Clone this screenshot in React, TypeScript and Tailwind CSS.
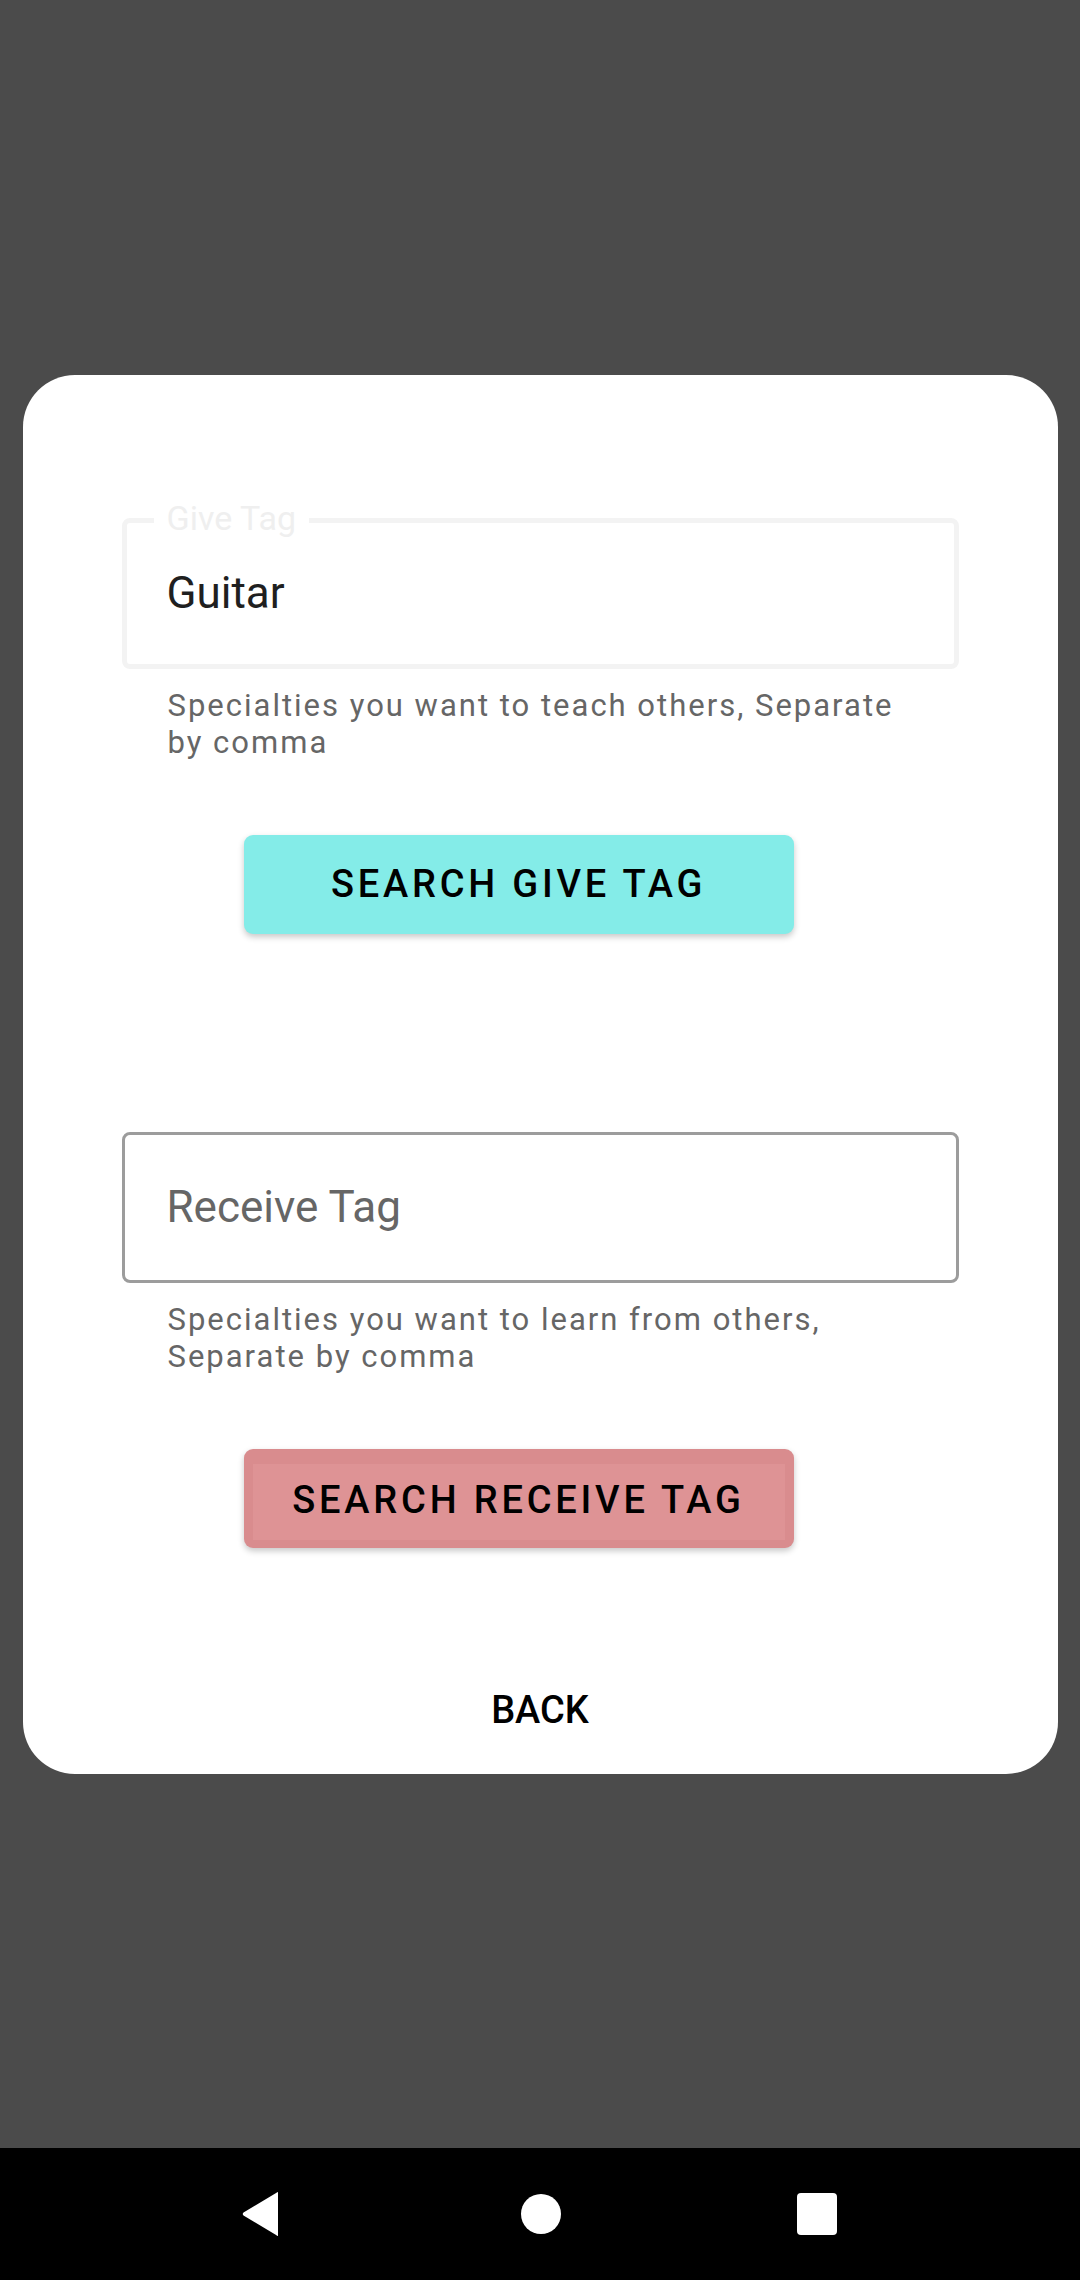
import { useState } from "react";

function TagField({
  label,
  value,
  placeholder,
  helper,
}: {
  label?: string;
  value?: string;
  placeholder?: string;
  helper: string;
}) {
  const filled = Boolean(value);

  return (
    <div className="mx-[99px]">
      <div
        className={
          filled
            ? "relative flex h-[151px] items-center rounded-[8px] border-[5px] border-[#f3f3f3] pl-[40px]"
            : "relative flex h-[151px] items-center rounded-[8px] border-[3px] border-[#9c9c9c] pl-[42px]"
        }
      >
        {filled && label ? (
          <span className="absolute left-[27px] top-[-25px] bg-white px-[13px] text-[34px] leading-[40px] text-[#efefef]">
            {label}
          </span>
        ) : null}
        <span className={filled ? "text-[44px] text-[#1f1f1f]" : "text-[44px] text-[#666666]"}>
          {filled ? value : placeholder}
        </span>
      </div>
      <p className="mt-[18px] pl-[46px] pr-[46px] text-[31px] leading-[37px] tracking-[2px] text-[#666666]">
        {helper}
      </p>
    </div>
  );
}

export default function App() {
  const [giveTag] = useState("Guitar");

  return (
    <div
      className="flex h-[2280px] w-[1080px] flex-col bg-[#4b4b4b]"
      style={{ fontFamily: "Roboto, 'Noto Sans', sans-serif" }}
    >
      <div className="flex flex-1 items-center justify-center">
        <section className="w-[1035px] rounded-[52px] bg-white pb-[42px] pt-[143px]">
          <TagField
            label="Give Tag"
            value={giveTag}
            helper="Specialties you want to teach others, Separate by comma"
          />
          <button className="ml-[221px] mt-[74px] flex h-[99px] w-[550px] items-center justify-center rounded-[9px] bg-[#84ece8] text-[38px] font-medium tracking-[0.1em] text-black shadow-[0_3px_6px_rgba(0,0,0,0.22)]">
            SEARCH GIVE TAG
          </button>

          <div className="mt-[198px]">
            <TagField
              placeholder="Receive Tag"
              helper="Specialties you want to learn from others, Separate by comma"
            />
          </div>
          <button className="ml-[221px] mt-[74px] flex h-[99px] w-[550px] rounded-[9px] bg-[#d98c8e] px-[9px] pb-[8px] pt-[15px] shadow-[0_3px_6px_rgba(0,0,0,0.22)]">
            <span className="flex flex-1 items-center justify-center bg-[#de9395] pb-[2px] text-[38px] font-medium tracking-[0.1em] text-black">
              SEARCH RECEIVE TAG
            </span>
          </button>

          <div className="mt-[140px] text-center text-[38px] font-medium leading-[44px] text-black">BACK</div>
        </section>
      </div>

      <nav className="flex h-[132px] items-center justify-center bg-black">
        <svg width="40" height="46" viewBox="0 0 40 46" className="-ml-[2px]">
          <path d="M37 2 L37 44 Q37 46 35.5 44.2 L2.5 24.5 Q1 23 2.5 21.5 L35.5 1.8 Q37 0 37 2 Z" fill="white" />
        </svg>
        <div className="ml-[240px] h-[40px] w-[40px] rounded-full bg-white" />
        <div className="ml-[236px] h-[42px] w-[40px] rounded-[4px] bg-white" />
      </nav>
    </div>
  );
}
